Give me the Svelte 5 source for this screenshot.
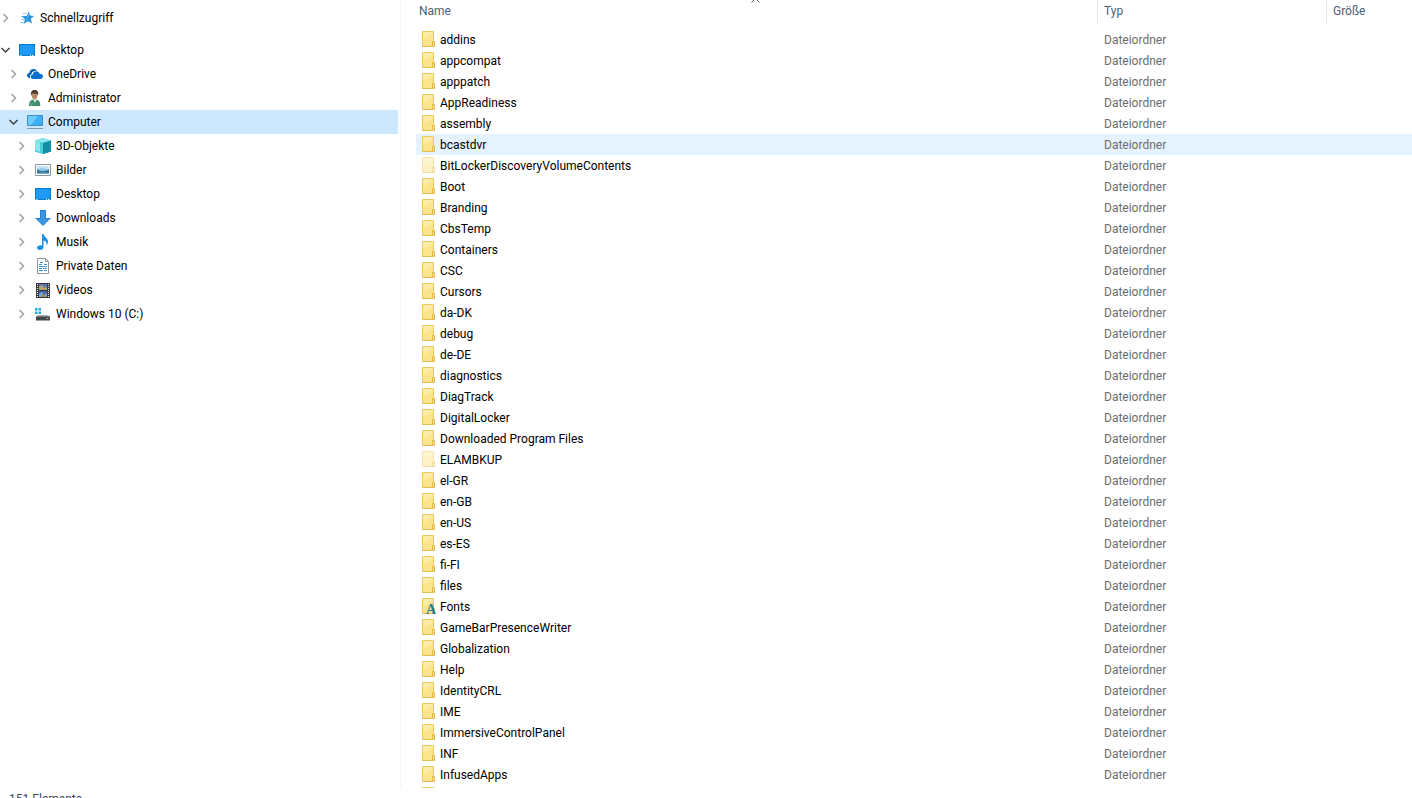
<script>
  const quick = { label: 'Schnellzugriff', icon: 'star', level: 0 };

  const tree = [
    { label: 'Desktop', icon: 'desktop', level: 0, open: true },
    { label: 'OneDrive', icon: 'onedrive', level: 1 },
    { label: 'Administrator', icon: 'user', level: 1 },
    { label: 'Computer', icon: 'computer', level: 1, open: true, selected: true },
    { label: '3D-Objekte', icon: 'cube', level: 2 },
    { label: 'Bilder', icon: 'picture', level: 2 },
    { label: 'Desktop', icon: 'desktop', level: 2 },
    { label: 'Downloads', icon: 'download', level: 2 },
    { label: 'Musik', icon: 'music', level: 2 },
    { label: 'Private Daten', icon: 'document', level: 2 },
    { label: 'Videos', icon: 'video', level: 2 },
    { label: 'Windows 10 (C:)', icon: 'drive', level: 2 }
  ];

  const names = [
    'addins', 'appcompat', 'apppatch', 'AppReadiness', 'assembly', 'bcastdvr',
    'BitLockerDiscoveryVolumeContents', 'Boot', 'Branding', 'CbsTemp', 'Containers',
    'CSC', 'Cursors', 'da-DK', 'debug', 'de-DE', 'diagnostics', 'DiagTrack',
    'DigitalLocker', 'Downloaded Program Files', 'ELAMBKUP', 'el-GR', 'en-GB',
    'en-US', 'es-ES', 'fi-FI', 'files', 'Fonts', 'GameBarPresenceWriter',
    'Globalization', 'Help', 'IdentityCRL', 'IME', 'ImmersiveControlPanel', 'INF',
    'InfusedApps'
  ];
  const hidden = ['BitLockerDiscoveryVolumeContents', 'ELAMBKUP'];
  const hovered = 'bcastdvr';
</script>

{#snippet treeIcon(name)}
  <svg class="icon" viewBox="0 0 16 16" aria-hidden="true">
    {#if name === 'star'}
      <path d="M4 3.500h3M2 6.500h3M2.500 9.500h3M1.500 12.500h3" stroke="#8ccaf3" />
      <path d="M9.800 1.500 11 5.600l4 .4-3.200 2.800 1.200 4.700-4-2.300L4.500 14 6 9.500 3 6.300l4.600-.2z" fill="#2b93dc" />
      <path d="M9.500 4 8.500 7.500l-3 4" stroke="#62b9f2" fill="none" />
    {:else if name === 'desktop'}
      <path d="M0 2h16v12H0z" fill="#0b78d0" />
      <path d="M1 3h14v10H1z" fill="#1c9af5" />
      <path d="M1 13.500h1.500M11 13.500h1M13 13.500h1.500" stroke="#d8f0ff" />
    {:else if name === 'onedrive'}
      <path d="M3.200 12C1.300 12 0 10.900 0 9.400 0 8 1 7 2.300 6.900 2.500 4.400 4.400 3 6.500 3c1.500 0 2.700.6 3.500 1.800-3-.5-5.300 1-5.500 3.500C3 8.800 2.500 10.500 3.200 12z" fill="#0a64b8" />
      <path d="M6.300 13c-1.500 0-2.500-.8-2.500-2.100 0-1.200.8-2.200 2-2.300C5.900 6.600 7.400 5.300 9.300 5.300c1.600 0 2.800.9 3.300 2.400 2 0 3.400 1.100 3.400 2.600S14.800 13 13.200 13z" fill="#0872cc" />
    {:else if name === 'user'}
      <path d="M2 16c-.2-4 1.500-6 4-6.500h3c3 .5 4.500 2.500 4.200 6.500z" fill="#3f9068" />
      <path d="m6 9 2 4 1.700-4z" fill="#e9eee9" />
      <path d="M4.500 4c0-2 1.200-3 3-3s3 1.200 3 3.200C10.500 7 9.200 9.500 7.500 9.500S4.500 7 4.500 4z" fill="#b88963" />
      <path d="M4 6C3.500 2.500 4.500 0 7.500 0S12 2 11 5.500L9.800 3.500C8 4 6 3.500 5 3.200z" fill="#4d3b30" />
      <path d="M2.500 12 4.500 15.500 6 13" fill="none" stroke="#75b792" />
    {:else if name === 'computer'}
      <path d="M.5 1.500h15v10H.5z" fill="#3db0f5" stroke="#3d8fc4" />
      <path d="M1 2h10L4 11H1z" fill="#6accfb" />
      <path d="M0 14.500h16" stroke="#7d97a8" />
    {:else if name === 'cube'}
      <path d="m8 0 8 2.500v11L8 16l-8-2.500v-11z" fill="#29bccc" />
      <path d="M8 0 16 2.500 8 5 0 2.500z" fill="#8ce6ed" />
      <path d="M0 2.500 8 5v11l-8-2.500z" fill="#46d0dc" />
      <path d="M8 5 16 2.500v11L8 16z" fill="#128fa4" />
      <path d="m0 2.500 5 2v9.500L0 12z" fill="#8de3ea" />
    {:else if name === 'picture'}
      <path d="M.5 2.500h15v11H.5z" fill="#fff" stroke="#8b959b" />
      <path d="M2 4h12v8H2z" fill="#8bc9ed" />
      <path d="M2 6.500q3 1 5-1 3 2 7 1.500V4H2z" fill="#c8e5f4" />
      <path d="M2 7.500q4 2 7 1.500 3-.500 5-1.500V12H2z" fill="#36718d" />
      <path d="M2 11q6-1.500 12 0v1H2z" fill="#6aa9c4" />
    {:else if name === 'download'}
      <path d="M5 0h6v8h5l-8 8-8-8h5z" fill="#2f80cf" />
      <path d="M6 1h4v8h4l-6 6-6-6h4z" fill="#3b95e5" />
    {:else if name === 'music'}
      <path d="M7 0h1.500c.5 3 4.500 4 4.500 7.500 0 1.500-.6 3-1.500 4 .6-3-.7-4.600-3-5v6.500c0 1.800-1.500 3-3.500 3-1.700 0-3-.9-3-2.200 0-1.700 2-2.800 5-2.400z" fill="#1d8fe3" />
    {:else if name === 'document'}
      <path d="M2.500.5h8l3 3v12h-11z" fill="#fff" stroke="#8b979d" />
      <path d="M10.500.5v3h3" fill="none" stroke="#8b979d" />
      <path d="M5 4.500h3M4 6.500h3M9 6.500h3M4 8.500h8M4 10.500h3M8 10.500h4M4 12.500h4M9 12.500h3" stroke="#3f98c0" />
    {:else if name === 'video'}
      <path d="M1 1h14v15H1z" fill="#303339" />
      <path d="M2.500 2v13M13.500 2v13" stroke="#e8e8e8" stroke-width="1.200" stroke-dasharray="1 1" />
      <path d="M4 2h8v6H4z" fill="#6475ad" />
      <path d="M4 9h8v6H4z" fill="#4d67a6" />
      <path d="M4 5 7 3l2 3 3-1v3H4z" fill="#b2a96f" />
      <path d="m4 12 3-2 2 3 3-2v4H4z" fill="#79a5d6" />
      <path d="m6 15 2-3 4 3z" fill="#a88b53" />
    {:else if name === 'drive'}
      <path d="M0 2h2.500v2.500H0zM3.500 2H6v2.500H3.500zM0 5.500h2.500V8H0zM3.500 5.500H6V8H3.500z" fill="#18acdf" />
      <path d="M3 9h10l2 2H1z" fill="#a9adb0" />
      <path d="M1 10.500h14v4H1z" fill="#42474b" />
      <path d="M11.500 12.500h2" stroke="#68df81" />
    {/if}
  </svg>
{/snippet}

{#snippet treeRow(item)}
  <li
    class="node level-{item.level}"
    class:selected={item.selected}
    role="treeitem"
    aria-level={item.level + 1}
    aria-expanded={!!item.open}
    aria-selected={!!item.selected}
  >
    <button class="toggle" class:open={item.open} aria-label={item.label}>
      <svg viewBox="0 0 12 12" aria-hidden="true">
        {#if item.open}
          <path d="m1.500 4 4 4 4-4" />
        {:else}
          <path d="m3.500 2 4 4-4 4" />
        {/if}
      </svg>
    </button>
    <a href="#{item.icon}">
      {@render treeIcon(item.icon)}
      <span>{item.label}</span>
    </a>
  </li>
{/snippet}

{#snippet folder(name)}
  <svg class="folder" class:dim={hidden.includes(name)} viewBox="0 0 14 17" aria-hidden="true">
    <path d="M.5.5h11v15H.5z" fill="#fce48d" stroke="#e9c95f" />
    <path d="M1 1h10v2L1 9z" fill="#fdeba6" />
    <path d="M10.500 10.500h2v5h-2z" fill="#fde58c" stroke="#dfb94c" />
    <path d="M.5 15.500h12" stroke="#e2be50" />
    {#if name === 'Fonts'}
      <text x="4" y="16">A</text>
    {/if}
  </svg>
{/snippet}

<div class="explorer">
  <div class="panes">
    <nav>
      <ul class="group" role="tree">
        {@render treeRow(quick)}
      </ul>
      <ul class="group" role="tree">
        {#each tree as item}
          {@render treeRow(item)}
        {/each}
      </ul>
    </nav>

    <main>
      <table>
        <colgroup>
          <col />
          <col class="col-type" />
          <col class="col-size" />
        </colgroup>
        <thead>
          <tr>
            <th aria-sort="ascending">
              <button>Name</button>
              <svg class="sort" viewBox="0 0 9 5" aria-hidden="true"><path d="m.5 2.500 4-4 4 4" /></svg>
            </th>
            <th><button class="divided">Typ</button></th>
            <th><button class="divided">Größe</button></th>
          </tr>
        </thead>
        <tbody>
          {#each names as name}
            <tr class:hovered={name === hovered}>
              <td>
                <a class="file" href="#{name}">
                  {@render folder(name)}
                  <span>{name}</span>
                </a>
              </td>
              <td class="type"><span>Dateiordner</span></td>
              <td></td>
            </tr>
          {/each}
          <tr>
            <td><div class="file">{@render folder('')}</div></td>
            <td></td>
            <td></td>
          </tr>
        </tbody>
      </table>
    </main>
  </div>
  <footer>151 Elemente</footer>
</div>

<style>
  :global(body) {
    margin: 0;
    background: #fff;
  }

  .explorer {
    display: flex;
    flex-direction: column;
    height: 100vh;
    overflow: hidden;
    background: #fff;
    color: #000;
    font: 12px/20px Roboto, 'Open Sans', sans-serif;
  }

  .panes {
    display: flex;
    flex: 1;
    min-height: 0;
  }

  a {
    color: inherit;
    text-decoration: none;
  }

  button {
    border: 0;
    padding: 0;
    background: none;
    color: inherit;
    font: inherit;
    text-align: left;
  }

  nav {
    display: flex;
    flex: none;
    flex-direction: column;
    gap: 8px;
    box-sizing: border-box;
    width: 401px;
    padding: 6px 2px 0 0;
    border-right: 1px solid #f5f5f5;
  }

  .group {
    margin: 0;
    padding: 0;
    list-style: none;
  }

  .node {
    display: flex;
    align-items: center;
    gap: 7px;
    height: 24px;
  }

  .level-1 {
    padding-left: 8px;
  }

  .level-2 {
    padding-left: 16px;
  }

  .selected {
    background: #cce8ff;
  }

  .toggle {
    display: flex;
    width: 12px;
    height: 12px;
  }

  .toggle svg {
    width: 12px;
    height: 12px;
    fill: none;
    stroke: #a0a0a0;
    stroke-width: 1.5;
  }

  .toggle.open svg {
    stroke: #404040;
  }

  .node a {
    display: flex;
    align-items: center;
    gap: 5px;
    white-space: nowrap;
  }

  .icon {
    width: 16px;
    height: 16px;
  }

  main {
    flex: 1;
    min-width: 0;
    padding-left: 15px;
    overflow: hidden;
  }

  table {
    width: 100%;
    border-collapse: collapse;
    table-layout: fixed;
  }

  .col-type {
    width: 229px;
  }

  .col-size {
    width: 86px;
  }

  th {
    position: relative;
    height: 29px;
    padding: 0;
    color: #4c607a;
    font-weight: 400;
    vertical-align: top;
  }

  th button {
    display: block;
    box-sizing: border-box;
    width: 100%;
    height: 23px;
    padding: 0 0 1px 3px;
  }

  th .divided {
    padding-left: 6px;
    border-left: 1px solid #e5e5e5;
  }

  .sort {
    position: absolute;
    top: 0;
    left: 50%;
    width: 9px;
    height: 5px;
    margin-left: -6px;
    fill: none;
    stroke: #606060;
  }

  td {
    height: 21px;
    padding: 0;
    line-height: 19px;
  }

  td span {
    display: block;
    padding-top: 2px;
  }

  .hovered {
    background: #e5f3ff;
  }

  .file {
    display: flex;
    align-items: center;
    gap: 4px;
    height: 21px;
    padding-left: 6px;
    white-space: nowrap;
  }

  .folder {
    width: 14px;
    height: 17px;
    overflow: visible;
  }

  .folder.dim {
    opacity: 0.5;
  }

  .folder text {
    fill: #1d7d8c;
    font: bold 14px 'Liberation Serif', serif;
  }

  .type {
    padding-left: 7px;
    color: #6d6d6d;
  }

  footer {
    height: 10px;
    padding-left: 9px;
    overflow: hidden;
    color: #3c4a60;
    line-height: 22px;
  }
</style>
